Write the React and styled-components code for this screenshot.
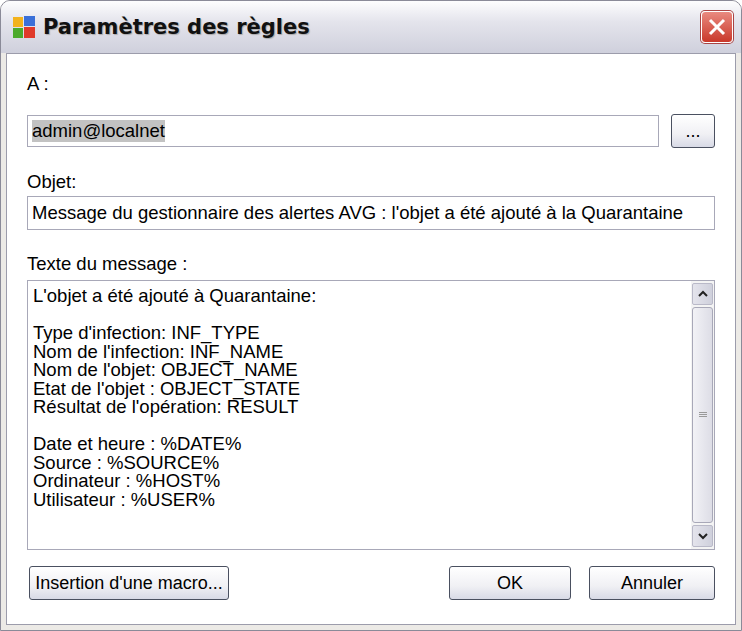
import React from "react";
import styled, { createGlobalStyle } from "styled-components";

const G = createGlobalStyle`
  html,body{margin:0;padding:0;background:#fff;}
  body{font-family:"Liberation Sans",Arial,sans-serif;font-size:18.5px;color:#000;}
`;
const Win = styled.div`
  width:742px;height:631px;box-sizing:border-box;display:flex;flex-direction:column;
  border:1px solid #8a8a98;border-radius:10px 10px 0 0;background:#eceae6;overflow:hidden;
`;
const Title = styled.div`
  height:52px;flex:none;display:flex;align-items:center;padding:0 8px 0 10px;gap:6px;
  background:linear-gradient(#fdfdfe,#e4e4ec 40%,#cfd0dc 100%);
  font-family:"DejaVu Sans",sans-serif;font-weight:bold;font-size:21px;color:#111;
  text-shadow:1px 1px 1px #aaa;
`;
const Close = styled.div`
  margin-left:auto;width:30px;height:30px;border-radius:4px;border:1px solid #fff;
  background:linear-gradient(#e98a80,#c9382a);display:flex;align-items:center;justify-content:center;
  box-shadow:0 0 0 1px #a44;
`;
const Body = styled.div`
  flex:1;margin:0 5px 5px;background:#fff;border:1px solid #9c9cab;padding:20px 20px 0 20px;
  display:flex;flex-direction:column;
`;
const Label = styled.div`height:20px;line-height:20px;margin:${p=>p.m||"0"};`;
const Row = styled.div`display:flex;align-items:center;gap:12px;margin-top:${p=>p.mt}px;`;
const Input = styled.div`
  flex:1;height:${p=>p.h||32}px;box-sizing:border-box;border:1px solid #a8a8b8;display:flex;align-items:center;padding:0 4px;
  white-space:nowrap;overflow:hidden;
`;
const Sel = styled.span`background:#c2c2c2;`;
const Btn = styled.div`
  width:${p=>p.w}px;height:34px;box-sizing:border-box;border:1px solid #4a5060;border-radius:3px;
  background:linear-gradient(#fff,#f0f0f4 60%,#d8dae6);display:flex;align-items:center;justify-content:center;
  font-size:18px;
`;
const Area = styled.div`
  height:270px;box-sizing:border-box;border:1px solid #a8a8b8;display:flex;margin-top:6px;
`;
const Text = styled.div`flex:1;padding:6px 5px;line-height:18.5px;white-space:pre;`;
const Scroll = styled.div`
  width:21px;display:flex;flex-direction:column;gap:2px;padding:2px 1px;background:#f4f4f4;
`;
const Arrow = styled.div`
  height:20px;border:1px solid #b9b9c8;border-radius:2px;background:linear-gradient(90deg,#e4e4ec,#cfd0dc);
  display:flex;align-items:center;justify-content:center;
`;
const Thumb = styled.div`
  flex:1;border:1px solid #a8a8b8;border-radius:3px;background:linear-gradient(90deg,#f2f2f6,#dddde6);
  display:flex;align-items:center;justify-content:center;
`;
const Bottom = styled.div`display:flex;align-items:center;margin-top:16px;padding-left:2px;`;
const Spacer = styled.div`flex:${p=>p.w?"none":1};width:${p=>p.w||0}px;`;

const msg=`L'objet a été ajouté à Quarantaine:

Type d'infection: INF_TYPE
Nom de l'infection: INF_NAME
Nom de l'objet: OBJECT_NAME
Etat de l'objet : OBJECT_STATE
Résultat de l'opération: RESULT

Date et heure : %DATE%
Source : %SOURCE%
Ordinateur : %HOST%
Utilisateur : %USER%`;

export default function App(){
  return <><G/><Win>
    <Title>
      <svg width="26" height="26" viewBox="0 0 26 26">
        <path d="M2 3h10v10H2z" fill="#f3b21c"/><path d="M13 2h11v10H13z" fill="#3a6fd8"/>
        <path d="M2 14h10v10H2z" fill="#4caa2b"/><path d="M13 13h11v11H13z" fill="#e03a2a"/>
      </svg>
      Paramètres des règles
      <Close><svg width="20" height="20" viewBox="0 0 20 20"><path d="M3 3L17 17M17 3L3 17" stroke="#fff" strokeWidth="3"/></svg></Close>
    </Title>
    <Body>
      <Label>A :</Label>
      <Row mt={20}><Input><Sel>admin@localnet</Sel></Input><Btn w={44}>...</Btn></Row>
      <Label m="24px 0 0">Objet:</Label>
      <Row mt={4}><Input h={34}>Message du gestionnaire des alertes AVG : l'objet a été ajouté à la Quarantaine</Input></Row>
      <Label m="24px 0 0">Texte du message :</Label>
      <Area><Text>{msg}</Text>
        <Scroll>
          <Arrow><svg width="10" height="8"><path d="M1 6L5 2L9 6" stroke="#222" strokeWidth="2" fill="none"/></svg></Arrow>
          <Thumb><svg width="8" height="6"><path d="M0 .5h8M0 2.5h8M0 4.5h8" stroke="#999"/></svg></Thumb>
          <Arrow><svg width="10" height="8"><path d="M1 2L5 6L9 2" stroke="#222" strokeWidth="2" fill="none"/></svg></Arrow>
        </Scroll>
      </Area>
      <Bottom>
        <Btn w={200}>Insertion d'une macro...</Btn>
        <Spacer/>
        <Btn w={122}>OK</Btn>
        <Spacer w={18}/>
        <Btn w={126}>Annuler</Btn>
      </Bottom>
    </Body>
  </Win></>;
}
